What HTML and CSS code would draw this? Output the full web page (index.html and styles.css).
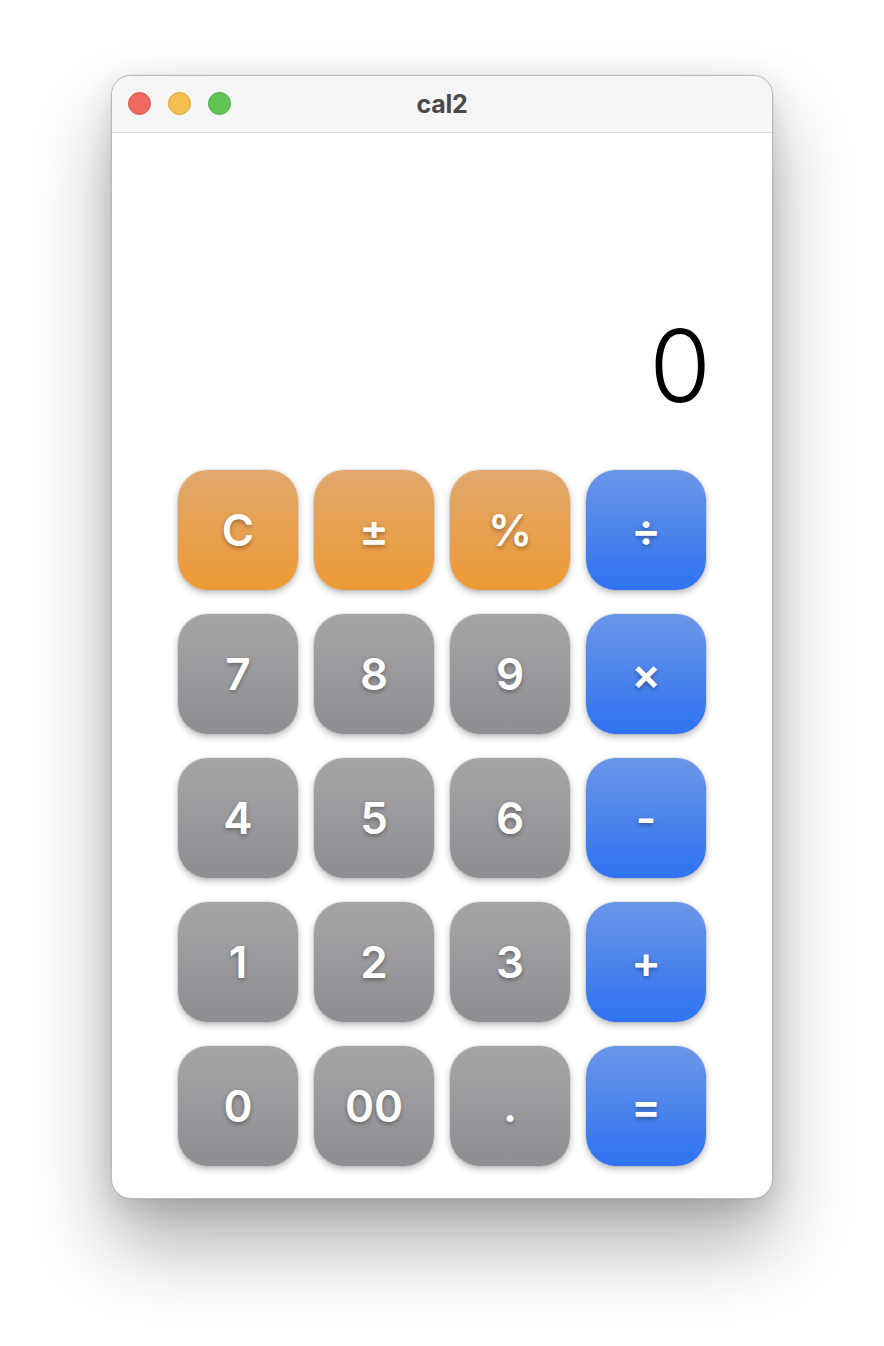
FILE: index.html
```html
<!DOCTYPE html>
<html>
<head>
<meta charset="utf-8">
<link rel="stylesheet" href="styles.css">
</head>
<body>
<div class="window">
  <div class="titlebar">
    <div class="lights">
      <span class="light red"></span>
      <span class="light yellow"></span>
      <span class="light green"></span>
    </div>
    <div class="title">cal2</div>
  </div>
  <div class="content">
    <div class="display">0</div>
    <div class="keys">
      <button class="key orange">C</button>
      <button class="key orange">±</button>
      <button class="key orange">%</button>
      <button class="key blue">÷</button>
      <button class="key gray">7</button>
      <button class="key gray">8</button>
      <button class="key gray">9</button>
      <button class="key blue">×</button>
      <button class="key gray">4</button>
      <button class="key gray">5</button>
      <button class="key gray">6</button>
      <button class="key blue">-</button>
      <button class="key gray">1</button>
      <button class="key gray">2</button>
      <button class="key gray">3</button>
      <button class="key blue">+</button>
      <button class="key gray">0</button>
      <button class="key gray">00</button>
      <button class="key gray">.</button>
      <button class="key blue">=</button>
    </div>
  </div>
</div>
</body>
</html>
```
FILE: styles.css
```css
html, body {
  margin: 0;
  background: #ffffff;
}
body {
  padding: 75px 0 0 111px;
  height: 1346px;
  box-sizing: border-box;
  font-family: "Inter", "Liberation Sans", sans-serif;
}
.window {
  width: 662px;
  height: 1124px;
  box-sizing: border-box;
  border: 1px solid #b9b9bb;
  border-radius: 20px;
  background: #ffffff;
  overflow: hidden;
  display: flex;
  flex-direction: column;
  box-shadow: 0 0 0 0.5px rgba(0,0,0,0.08), 0 45px 80px rgba(0,0,0,0.32), 0 8px 30px rgba(0,0,0,0.12);
}
.titlebar {
  position: relative;
  height: 56px;
  flex: none;
  background: #f5f6f8;
  border-bottom: 1px solid #dcdcde;
  display: flex;
  align-items: center;
  justify-content: center;
}
.lights {
  position: absolute;
  left: 16px;
  top: 16px;
  display: flex;
  gap: 17px;
}
.light {
  width: 23px;
  height: 23px;
  border-radius: 50%;
  box-sizing: border-box;
}
.red { background: #ee6a5e; border: 1px solid #d5574b; }
.yellow { background: #f5bf4f; border: 1px solid #d9a23c; }
.green { background: #61c554; border: 1px solid #4fa944; }
.title {
  font-family: "Inter", "Liberation Sans", sans-serif;
  font-weight: 700;
  font-size: 25px;
  color: #4a4a4a;
  letter-spacing: -0.2px;
}
.content {
  flex: 1;
  display: flex;
  flex-direction: column;
  justify-content: flex-end;
  padding-bottom: 32px;
}
.display {
  font-family: "Inter", "Liberation Sans", sans-serif;
  font-weight: 300;
  font-size: 100px;
  line-height: 100px;
  color: #000;
  text-align: right;
  padding-right: 61px;
  margin-bottom: 54px;
}
.keys {
  display: grid;
  grid-template-columns: repeat(4, 120px);
  grid-auto-rows: 120px;
  column-gap: 16px;
  row-gap: 24px;
  justify-content: center;
}
.key {
  border: none;
  border-radius: 30px;
  color: #fff;
  font-family: "Inter", "Liberation Sans", sans-serif;
  font-weight: 600;
  font-size: 44px;
  padding: 0;
  display: flex;
  align-items: center;
  justify-content: center;
  text-shadow: 0 2px 4px rgba(0,0,0,0.35);
  box-shadow: 0 0 0 1px rgba(0,0,0,0.06), 0 3px 7px rgba(0,0,0,0.28);
}
.orange {
  background: linear-gradient(to bottom, #e2a86c, #ec9a35);
}
.gray {
  background: linear-gradient(to bottom, #a5a5a7, #8e8d92);
}
.blue {
  background: linear-gradient(to bottom, #6a96e7, #2f73f1);
}
```
